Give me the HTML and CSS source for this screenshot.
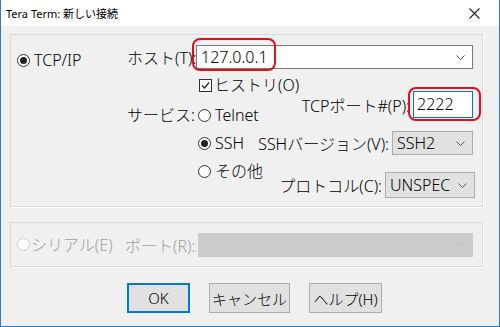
FILE: index.html
```html
<!DOCTYPE html>
<html lang="ja">
<head>
    <meta charset="UTF-8">
    <title>Tera Term: 新しい接続</title>
    <link rel="stylesheet" href="styles.css">
</head>
<body>
    <div class="window">
        <div class="titlebar">
            <span class="title">Tera Term: 新しい接続</span>
            <span class="close">
                <svg width="11" height="11" viewBox="0 0 11 11"><path d="M0.5 0.5 L10.5 10.5 M10.5 0.5 L0.5 10.5" stroke="#222" stroke-width="1.1" fill="none"/></svg>
            </span>
        </div>

        <div class="content">
            <div class="group group-tcp">
                <div class="left-col">
                    <label class="opt"><span class="radio checked"></span>TCP/IP</label>
                </div>
                <div class="right-col">
                    <div class="row host-row">
                        <span class="lbl">ホスト(T):</span>
                        <div class="marked">
                            <div class="select select-white host-select">
                                <span>127.0.0.1</span>
                                <svg class="chev" width="9" height="5" viewBox="0 0 9 5"><path d="M0.5 0.5 L4.5 4.5 L8.5 0.5" stroke="#555" fill="none"/></svg>
                            </div>
                            <span class="ring ring-host"></span>
                        </div>
                    </div>

                    <div class="split">
                        <div class="svc-col">
                            <label class="opt history"><span class="check">
                                <svg width="11" height="11" viewBox="0 0 11 11"><path d="M2 5.5 L4.5 8 L9 2.5" stroke="#222" stroke-width="1.2" fill="none"/></svg>
                            </span>ヒストリ(O)</label>
                            <div class="svc">
                                <span class="lbl">サービス:</span>
                                <div class="svc-list">
                                    <label class="opt"><span class="radio"></span>Telnet</label>
                                    <label class="opt"><span class="radio checked"></span>SSH</label>
                                    <label class="opt"><span class="radio"></span>その他</label>
                                </div>
                            </div>
                        </div>

                        <div class="ctl-col">
                            <div class="row port-row">
                                <span class="lbl-r">TCPポート#(P):</span>
                                <div class="marked">
                                    <div class="port-input">2222</div>
                                    <span class="ring ring-port"></span>
                                </div>
                            </div>
                            <div class="row ssh-row">
                                <span class="lbl-r">SSHバージョン(V):</span>
                                <div class="select select-gray ssh-select">
                                    <span>SSH2</span>
                                    <svg class="chev" width="9" height="5" viewBox="0 0 9 5"><path d="M0.5 0.5 L4.5 4.5 L8.5 0.5" stroke="#555" fill="none"/></svg>
                                </div>
                            </div>
                            <div class="row proto-row">
                                <span class="lbl-r">プロトコル(C):</span>
                                <div class="select select-gray proto-select">
                                    <span>UNSPEC</span>
                                    <svg class="chev" width="9" height="5" viewBox="0 0 9 5"><path d="M0.5 0.5 L4.5 4.5 L8.5 0.5" stroke="#555" fill="none"/></svg>
                                </div>
                            </div>
                        </div>
                    </div>
                </div>
            </div>

            <div class="group group-serial">
                <label class="opt disabled serial"><span class="radio"></span>シリアル(E)</label>
                <span class="lbl disabled port-lbl">ポート(R):</span>
                <div class="select select-disabled serial-select">
                    <span></span>
                    <svg class="chev" width="9" height="5" viewBox="0 0 9 5"><path d="M0.5 0.5 L4.5 4.5 L8.5 0.5" stroke="#bbb" fill="none"/></svg>
                </div>
            </div>

            <div class="buttons">
                <button class="btn btn-ok">OK</button>
                <button class="btn btn-cancel">キャンセル</button>
                <button class="btn btn-help">ヘルプ(H)</button>
            </div>
        </div>
    </div>
</body>
</html>
```

FILE: styles.css
```css
body {
    margin: 0;
    padding: 0;
    background-color: #f0f0f0;
    font-family: "Noto Sans", "Noto Sans CJK JP", sans-serif;
    font-size: 16px;
    font-weight: 300;
    color: #000;
}

.window {
    width: 500px;
    height: 327px;
    box-sizing: border-box;
    border: 1px solid #2b7cd3;
    border-top: none;
    background-color: #f0f0f0;
    overflow: hidden;
}

.titlebar {
    height: 26px;
    background-color: #fff;
    display: flex;
    align-items: center;
    justify-content: space-between;
    padding-left: 5px;
    font-size: 11px;
    font-weight: 400;
}

.close {
    width: 46px;
    display: flex;
    justify-content: center;
    margin-right: 2px;
}

.content {
    padding: 8px 0 0 9px;
}

.group {
    width: 473px;
    box-sizing: border-box;
    border: 1px solid #d9d9d9;
    box-shadow: 1px 1px 0 #fff;
}

/* TCP/IP group */
.group-tcp {
    height: 173px;
    display: flex;
}

.left-col {
    width: 116px;
    padding: 15px 0 0 6px;
    box-sizing: border-box;
    flex: none;
}

.right-col {
    width: 347px;
    flex: none;
}

.row {
    display: flex;
    align-items: center;
}

.opt {
    display: flex;
    align-items: center;
    height: 20px;
    line-height: 20px;
    white-space: nowrap;
}

.radio {
    width: 11px;
    height: 11px;
    border: 1px solid #333;
    border-radius: 50%;
    background: #fff;
    margin-right: 4px;
    display: flex;
    align-items: center;
    justify-content: center;
    flex: none;
}

.radio.checked::after {
    content: "";
    width: 7px;
    height: 7px;
    border-radius: 50%;
    background: #222;
}

.check {
    width: 11px;
    height: 11px;
    border: 1px solid #333;
    background: #fff;
    margin-right: 2px;
    display: flex;
    flex: none;
}

.lbl {
    width: 69px;
    text-align: right;
    padding-right: 2px;
    box-sizing: border-box;
    white-space: nowrap;
    flex: none;
}

.lbl-r {
    white-space: nowrap;
    margin-right: 3px;
}

.host-row {
    margin-top: 10px;
    height: 24px;
}

.marked {
    position: relative;
}

.ring {
    position: absolute;
    border: 2.5px solid #e0101a;
    border-radius: 8px;
    pointer-events: none;
}

.ring-host {
    left: -4px;
    top: -7px;
    width: 80px;
    height: 29px;
}

.ring-port {
    left: -5px;
    top: -4px;
    width: 69px;
    height: 30px;
}

.select {
    height: 24px;
    box-sizing: border-box;
    display: flex;
    align-items: center;
    justify-content: space-between;
    padding: 0 7px 0 4px;
    line-height: 20px;
}

.select-white {
    background: #fff;
    border: 1px solid #7a7a7a;
}

.select-gray {
    background: #e1e1e1;
    border: 1px solid #adadad;
}

.select-disabled {
    background: #cccccc;
    border: 1px solid #cccccc;
}

.host-select {
    width: 277px;
}

.split {
    display: flex;
}

.svc-col {
    width: 120px;
    flex: none;
}

.history {
    margin-top: 8px;
    height: 16px;
    padding-left: 72px;
}

.svc {
    display: flex;
    margin-top: 8px;
}

.svc .lbl {
    height: 28px;
    line-height: 28px;
}

.svc-list {
    padding-left: 2px;
}

.svc-list .opt {
    height: 28px;
}

.ctl-col {
    display: flex;
    flex-direction: column;
    align-items: flex-end;
    margin-left: auto;
    margin-right: 1px;
}

.port-row {
    margin-top: 22px;
}

.port-input {
    width: 60px;
    height: 27px;
    box-sizing: border-box;
    background: #fff;
    border: 1px solid #0078d7;
    padding-left: 3px;
    line-height: 25px;
}

.ssh-row {
    margin-top: 13px;
}

.ssh-select {
    width: 81px;
}

.proto-row {
    margin-top: 17px;
    margin-right: -2px;
}

.proto-select {
    width: 90px;
    height: 26px;
}

/* serial group */
.group-serial {
    margin-top: 15px;
    height: 45px;
    display: flex;
    align-items: center;
}

.disabled {
    color: #a0a0a0;
}

.serial {
    width: 114px;
    padding-left: 6px;
    box-sizing: border-box;
}

.serial .radio {
    border-color: #cfcfcf;
    margin-right: 1px;
}

.port-lbl {
    width: 73px;
    text-align: left;
    padding-left: 0;
}

.serial-select {
    width: 275px;
}

/* buttons */
.buttons {
    display: flex;
    gap: 19px;
    margin-top: 16px;
    padding-left: 117px;
}

.btn {
    height: 30px;
    box-sizing: border-box;
    background: #e1e1e1;
    border: 1px solid #adadad;
    font-family: "Noto Sans", "Noto Sans CJK JP", sans-serif;
    font-size: 15px;
    font-weight: 300;
    padding: 0;
    color: #000;
}

.btn-ok {
    width: 63px;
    border: 2px solid #0078d7;
}

.btn-cancel {
    width: 81px;
}

.btn-help {
    width: 73px;
}
```
